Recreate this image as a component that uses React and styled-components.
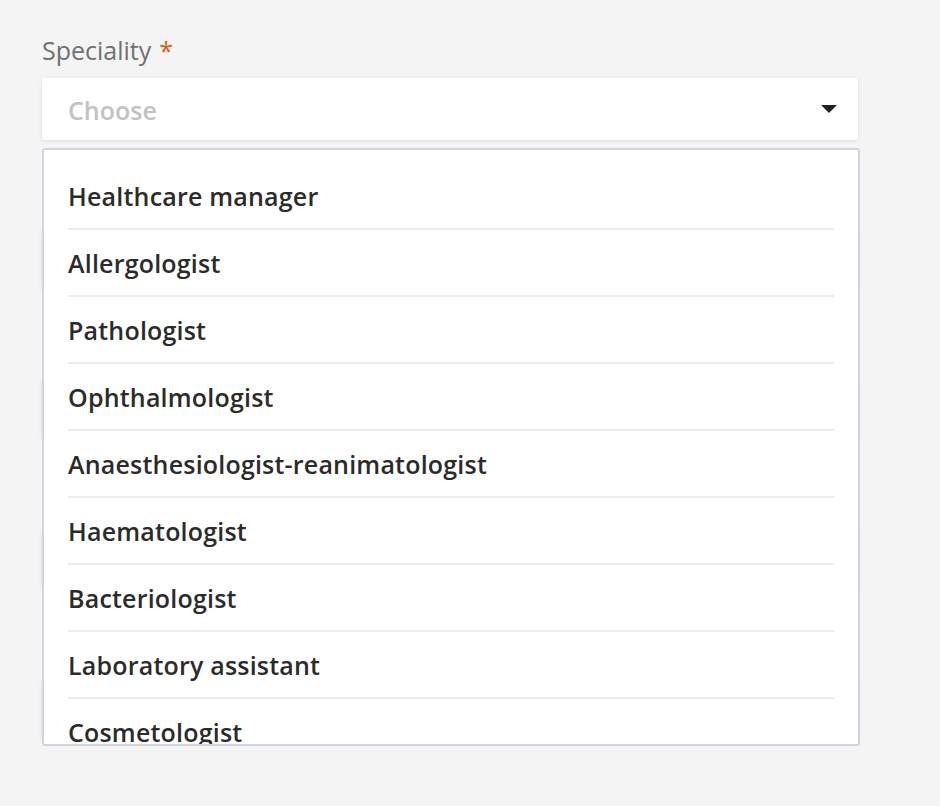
import { useState } from 'react'
import styled, { createGlobalStyle } from 'styled-components'

const GlobalStyle = createGlobalStyle`
  body {
    margin: 0;
    background: #f4f4f4;
    font-family: "Open Sans", "Noto Sans", sans-serif;
  }
`

const Page = styled.div`
  width: 858px;
  min-height: 806px;
  box-sizing: border-box;
  padding: 30px 0 0 42px;
  display: flex;
  flex-direction: column;
  gap: 40px;
`

const Field = styled.div`
  display: flex;
  flex-direction: column;
  gap: 8px;
  position: relative;
`

const Label = styled.label`
  font-size: 25px;
  line-height: 40px;
  height: 40px;
  color: #707070;
`

const Required = styled.span`
  color: #e8590c;
  margin-left: 8px;
`

const SelectBox = styled.div`
  height: 62px;
  background: #fff;
  border-radius: 3px;
  box-shadow: 0 1px 4px rgba(0, 0, 0, 0.09);
  display: flex;
  align-items: center;
  justify-content: space-between;
  padding: 0 21px 0 26px;
  box-sizing: border-box;
  cursor: pointer;
`

const Placeholder = styled.span`
  font-size: 25px;
  font-weight: 600;
  color: #c2c2c2;
  margin-top: 2px;
`

const Caret = styled.span`
  margin-left: auto;
  width: 0;
  height: 0;
  border-left: 8px solid transparent;
  border-right: 8px solid transparent;
  border-top: 8px solid #222;
`

const Menu = styled.ul`
  position: absolute;
  top: 118px;
  left: 0;
  width: 818px;
  height: 598px;
  box-sizing: border-box;
  margin: 0;
  padding: 13px 0 0;
  list-style: none;
  background: #fff;
  border: 2px solid #cfd5df;
  border-radius: 3px;
  overflow: hidden;
  z-index: 10;
`

const Option = styled.li`
  margin: 0 24px;
  height: 65px;
  display: flex;
  align-items: center;
  border-bottom: 2px solid #ececec;
  font-size: 25px;
  font-weight: 600;
  color: #2b2b2b;
  letter-spacing: 0.2px;
  cursor: pointer;
`

const specialities = [
  'Healthcare manager',
  'Allergologist',
  'Pathologist',
  'Ophthalmologist',
  'Anaesthesiologist-reanimatologist',
  'Haematologist',
  'Bacteriologist',
  'Laboratory assistant',
  'Cosmetologist',
]

// the other fields sit under the open menu, only their shadows show
const hiddenFields = [1, 2, 3, 4]

const App = () => {
  const [open, setOpen] = useState(true)

  return (
    <>
      <GlobalStyle />
      <Page>
        <Field>
          <Label>
            Speciality
            <Required>*</Required>
          </Label>
          <SelectBox onClick={() => setOpen(!open)}>
            <Placeholder>Choose</Placeholder>
            <Caret />
          </SelectBox>
          {open ? (
            <Menu>
              {specialities.map((item) => (
                <Option key={item} onClick={() => setOpen(false)}>{item}</Option>
              ))}
            </Menu>
          ) : null}
        </Field>
        {hiddenFields.map((id) => (
          <Field key={id}>
            <Label />
            <SelectBox>
              <Caret />
            </SelectBox>
          </Field>
        ))}
      </Page>
    </>
  )
}

export default App
